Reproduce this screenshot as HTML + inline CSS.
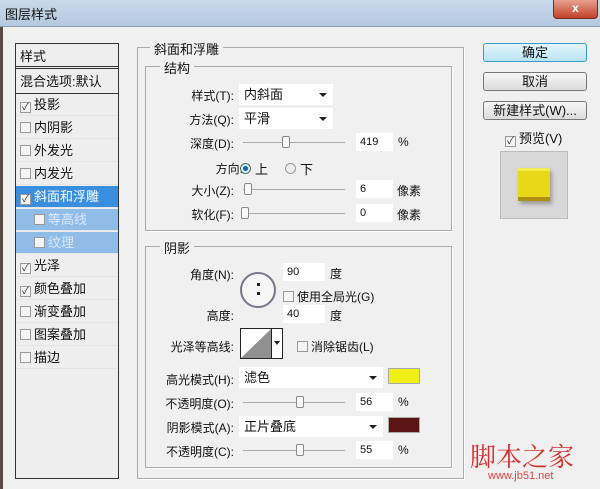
<!DOCTYPE html><html><head><meta charset="utf-8"><style>
*{margin:0;padding:0;box-sizing:border-box}
body{width:600px;height:489px;overflow:hidden;background:#f0f0f0;font-family:"Liberation Sans","Noto Sans CJK SC",sans-serif;font-size:12px;color:#111;position:relative}
.a{position:absolute;white-space:nowrap}
.title{left:0;top:0;width:600px;height:27px;background:linear-gradient(#c9d9ea,#b5cadf);border-bottom:1px solid #8aa0b8}
.close{left:553px;top:0;width:45px;height:19px;background:linear-gradient(#e8a090,#c0412c);border:1px solid #7a2a20;border-top:none;border-radius:0 0 4px 4px;color:#fff;font-weight:bold;text-align:center;line-height:17px}
.list{left:15px;top:43px;width:104px;height:436px;border:1px solid #333;background:#eeeeee}
.it{position:absolute;left:0;width:102px;height:22px;line-height:22px;padding-left:4px;font-size:13px;border-bottom:1px solid #e4e4e4}
.cb{display:inline-block;width:11px;height:11px;border:1px solid #999;background:#f4f4f4;vertical-align:-1px;margin-right:3px;font-size:10px;line-height:9px;text-align:center;color:#334}
.sel{background:#3a8ee0;color:#fff}
.sub{background:#8fbde8;color:#dbe9f7}
.box{border:1px solid #aaa;box-shadow:1px 1px 0 #fff}
.lg{background:#f0f0f0;padding:0 4px;font-size:13px}
.lbl{text-align:right;font-size:12px}
.dd{background:#fff;height:21px;line-height:21px;padding-left:5px;font-size:13px}
.dd:after{content:"";position:absolute;right:6px;top:9px;border:4px solid transparent;border-top:4px solid #222}
.inp{background:#fff;height:18px;line-height:18px;padding-left:4px;width:37px;font-size:11px}
.sl{height:1px;background:#aaa}
.kn{width:8px;height:12px;border:1px solid #888;background:#f8f8f8;border-radius:2px}
.btn{left:483px;width:104px;height:19px;border:1px solid #777;border-radius:3px;background:linear-gradient(#f6f6f6,#dcdcdc);text-align:center;line-height:17px;font-size:13px}
</style></head><body>
<div class="a title"></div><div class="a" style="left:5px;top:4px;font-size:13px">图层样式</div>
<div class="a close">x</div>
<div class="a" style="left:0;top:27px;width:3px;height:462px;background:#5a4a40"></div>

<div class="a list">
<div class="it" style="top:0;height:25px;line-height:25px;border-bottom:3px double #333">样式</div>
<div class="it" style="top:27px;height:23px;border-bottom:1px solid #333">混合选项:默认</div>
<div class="it" style="top:50px"><span class="cb">✓</span>投影</div>
<div class="it" style="top:73px"><span class="cb"></span>内阴影</div>
<div class="it" style="top:96px"><span class="cb"></span>外发光</div>
<div class="it" style="top:119px"><span class="cb"></span>内发光</div>
<div class="it sel" style="top:142px"><span class="cb">✓</span>斜面和浮雕</div>
<div class="it sub" style="top:165px;padding-left:18px"><span class="cb"></span>等高线</div>
<div class="it sub" style="top:188px;padding-left:18px"><span class="cb"></span>纹理</div>
<div class="it" style="top:211px"><span class="cb">✓</span>光泽</div>
<div class="it" style="top:234px"><span class="cb">✓</span>颜色叠加</div>
<div class="it" style="top:257px"><span class="cb"></span>渐变叠加</div>
<div class="it" style="top:280px"><span class="cb"></span>图案叠加</div>
<div class="it" style="top:303px"><span class="cb"></span>描边</div>
</div>

<div class="a box" style="left:137px;top:47px;width:327px;height:432px"></div>
<div class="a lg" style="left:150px;top:39px">斜面和浮雕</div>
<div class="a box" style="left:145px;top:66px;width:307px;height:165px"></div>
<div class="a lg" style="left:160px;top:58px">结构</div>
<div class="a box" style="left:145px;top:246px;width:307px;height:222px"></div>
<div class="a lg" style="left:160px;top:238px">阴影</div>

<div class="a lbl" style="left:170px;top:87px;width:64px">样式(T):</div>
<div class="a dd" style="left:239px;top:84px;width:94px">内斜面</div>
<div class="a lbl" style="left:170px;top:111px;width:64px">方法(Q):</div>
<div class="a dd" style="left:239px;top:108px;width:94px">平滑</div>
<div class="a lbl" style="left:170px;top:135px;width:64px">深度(D):</div>
<div class="a sl" style="left:243px;top:142px;width:102px"></div><div class="a kn" style="left:282px;top:136px"></div>
<div class="a inp" style="left:356px;top:133px">419</div><div class="a" style="left:398px;top:135px">%</div>
<div class="a lbl" style="left:170px;top:160px;width:73px">方向:</div>
<div class="a" style="left:240px;top:163px;width:11px;height:11px;border-radius:50%;border:1px solid #567;background:radial-gradient(#1d5fa8 35%,#cfe 45%)"></div>
<div class="a" style="left:255px;top:159px;font-size:13px">上</div>
<div class="a" style="left:285px;top:163px;width:11px;height:11px;border-radius:50%;border:1px solid #999;background:#eee"></div>
<div class="a" style="left:300px;top:159px;font-size:13px">下</div>
<div class="a lbl" style="left:170px;top:182px;width:64px">大小(Z):</div>
<div class="a sl" style="left:243px;top:189px;width:102px"></div><div class="a kn" style="left:244px;top:183px"></div>
<div class="a inp" style="left:356px;top:180px">6</div><div class="a" style="left:397px;top:182px">像素</div>
<div class="a lbl" style="left:170px;top:206px;width:64px">软化(F):</div>
<div class="a sl" style="left:243px;top:213px;width:102px"></div><div class="a kn" style="left:241px;top:207px"></div>
<div class="a inp" style="left:356px;top:204px">0</div><div class="a" style="left:397px;top:206px">像素</div>

<div class="a lbl" style="left:170px;top:266px;width:64px">角度(N):</div>
<div class="a inp" style="left:283px;top:263px;width:42px">90</div><div class="a" style="left:330px;top:265px">度</div>
<div class="a" style="left:240px;top:272px;width:36px;height:36px;border-radius:50%;border:2px solid #778;background:#f6f6f6"></div>
<div class="a" style="left:257px;top:283px;width:3px;height:3px;background:#222"></div>
<div class="a" style="left:257px;top:292px;width:3px;height:3px;background:#222"></div>
<div class="a" style="left:283px;top:288px"><span class="cb"></span>使用全局光(G)</div>
<div class="a lbl" style="left:170px;top:307px;width:64px">高度:</div>
<div class="a inp" style="left:283px;top:305px;width:42px">40</div><div class="a" style="left:330px;top:307px">度</div>
<div class="a lbl" style="left:150px;top:338px;width:84px">光泽等高线:</div>
<div class="a" style="left:240px;top:328px;width:43px;height:31px;border:1px solid #222;background:#fff">
<svg width="30" height="29" style="position:absolute;left:0;top:0"><polygon points="0,29 30,0 30,29" fill="#909090"/></svg>
<div style="position:absolute;left:30px;top:0;width:1px;height:29px;background:#222"></div>
<div style="position:absolute;left:33px;top:12px;border:3px solid transparent;border-top:4px solid #222"></div></div>
<div class="a" style="left:297px;top:338px"><span class="cb"></span>消除锯齿(L)</div>
<div class="a lbl" style="left:150px;top:371px;width:84px">高光模式(H):</div>
<div class="a dd" style="left:239px;top:367px;width:144px">滤色</div>
<div class="a" style="left:388px;top:368px;width:32px;height:16px;background:#f0f014;border:1px solid #aaa"></div>
<div class="a lbl" style="left:150px;top:395px;width:84px">不透明度(O):</div>
<div class="a sl" style="left:243px;top:402px;width:102px"></div><div class="a kn" style="left:296px;top:396px"></div>
<div class="a inp" style="left:356px;top:393px">56</div><div class="a" style="left:398px;top:395px">%</div>
<div class="a lbl" style="left:150px;top:419px;width:84px">阴影模式(A):</div>
<div class="a dd" style="left:239px;top:416px;width:144px">正片叠底</div>
<div class="a" style="left:388px;top:417px;width:32px;height:16px;background:#5c1515;border:1px solid #aaa"></div>
<div class="a lbl" style="left:150px;top:443px;width:84px">不透明度(C):</div>
<div class="a sl" style="left:243px;top:450px;width:102px"></div><div class="a kn" style="left:296px;top:444px"></div>
<div class="a inp" style="left:356px;top:441px">55</div><div class="a" style="left:398px;top:443px">%</div>

<div class="a btn" style="top:43px;border-color:#3c9cc8;background:linear-gradient(#e4f6fc,#b8e4f4)">确定</div>
<div class="a btn" style="top:72px">取消</div>
<div class="a btn" style="top:101px">新建样式(W)...</div>
<div class="a" style="left:505px;top:128px;font-size:13px"><span class="cb">✓</span>预览(V)</div>
<div class="a" style="left:500px;top:151px;width:68px;height:68px;background:#d8d8d8;border:1px solid #bbb"></div>
<div class="a" style="left:518px;top:168px;width:32px;height:33px;background:#e8d818;border-top:3px solid #f4ec50;border-bottom:4px solid #b09010;box-shadow:2px 3px 4px #999"></div>
<div class="a" style="left:470px;top:437px;font-size:26px;color:#d43030;font-family:'Noto Serif CJK SC',serif">脚本之家</div>
<div class="a" style="left:488px;top:470px;font-size:11px;color:#d44">www.jb51.net</div>
</body></html>
